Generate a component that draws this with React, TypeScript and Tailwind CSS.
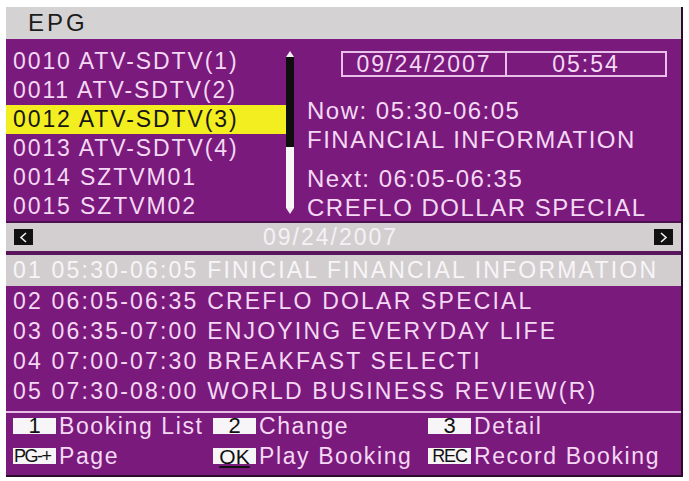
const CHANNELS = [
  "0010 ATV-SDTV(1)",
  "0011 ATV-SDTV(2)",
  "0012 ATV-SDTV(3)",
  "0013 ATV-SDTV(4)",
  "0014 SZTVM01",
  "0015 SZTVM02",
];

const EVENTS = [
  "02 06:05-06:35 CREFLO DOLAR SPECIAL",
  "03 06:35-07:00 ENJOYING EVERYDAY LIFE",
  "04 07:00-07:30 BREAKFAST SELECTI",
  "05 07:30-08:00 WORLD BUSINESS REVIEW(R)",
];

function ArrowKey({ dir }: { dir: "left" | "right" }) {
  return (
    <div className="w-[19px] h-[16px] bg-[#111] flex items-center justify-center shrink-0">
      <svg width="9" height="11" viewBox="0 0 9 11">
        <path
          d={dir === "left" ? "M7 1 L2 5.5 L7 10" : "M2 1 L7 5.5 L2 10"}
          stroke="#f2f2f2"
          strokeWidth="1.6"
          fill="none"
        />
      </svg>
    </div>
  );
}

function Key({ children, className = "" }: { children: React.ReactNode; className?: string }) {
  return (
    <div
      className={`w-[43px] h-[16px] bg-[#f7f5f7] text-[#111] flex items-center justify-center shrink-0 leading-none ${className}`}
    >
      {children}
    </div>
  );
}

function Legend({ keyEl, label }: { keyEl: React.ReactNode; label: string }) {
  return (
    <div className="flex items-center gap-[3px] h-[16px]">
      {keyEl}
      <span className="text-[23px] leading-none tracking-[1.6px] text-[#f4d8f4] whitespace-nowrap">{label}</span>
    </div>
  );
}

export default function App() {
  return (
    <div className="w-[689px] h-[481px] bg-white pl-[6px] pt-[7px] font-['Liberation_Sans',Arial,sans-serif]">
      <div className="w-[677px] h-[470px] flex flex-col border-r-2 border-b-2 border-[#2a0c2a] bg-[#7a1a7c] overflow-hidden">
        {/* title */}
        <div className="h-[32px] shrink-0 bg-[#d5d2d3] flex items-center pl-[22px]">
          <span className="text-[24px] leading-none tracking-[3px] text-[#1c1c1c]">EPG</span>
        </div>

        {/* channels + now/next */}
        <div className="h-[182px] shrink-0 flex overflow-hidden">
          <div className="w-[280px] pt-[8px]">
            {CHANNELS.map((c) => (
              <div
                key={c}
                className={`h-[29px] flex items-center pl-[7px] text-[23px] leading-none tracking-[1.9px] whitespace-nowrap ${
                  c.includes("(3)") ? "bg-[#f3ee1f] text-[#161616]" : "text-[#f4d8f4]"
                }`}
              >
                {c}
              </div>
            ))}
          </div>

          <div className="w-[8px] pt-[12px] flex flex-col items-center">
            <svg width="8" height="6" viewBox="0 0 8 6">
              <path d="M0 6 L4 0 L8 6 Z" fill="#f4eef4" />
            </svg>
            <div className="w-[8px] h-[90px] bg-[#0e0e0e]" />
            <div className="w-[8px] h-[61px] bg-[#f7f7f7]" />
            <svg width="8" height="6" viewBox="0 0 8 6">
              <path d="M0 0 L4 6 L8 0 Z" fill="#f4eef4" />
            </svg>
          </div>

          <div className="flex-1 pl-[13px] text-[#f4d8f4]">
            <div className="ml-[34px] mt-[12px] w-[326px] h-[26px] border-2 border-[#e8bfe8] flex text-[23px] leading-none tracking-[2px]">
              <div className="w-[164px] border-r-2 border-[#e8bfe8] flex items-center justify-center">09/24/2007</div>
              <div className="flex-1 flex items-center justify-center">05:54</div>
            </div>
            <div className="mt-[19px] text-[24px] leading-none tracking-[1.5px] whitespace-nowrap">
              <div className="h-[29px] flex items-center">Now: 05:30-06:05</div>
              <div className="h-[29px] flex items-center">FINANCIAL INFORMATION</div>
              <div className="h-[29px] flex items-center mt-[10px]">Next: 06:05-06:35</div>
              <div className="h-[29px] flex items-center">CREFLO DOLLAR SPECIAL</div>
            </div>
          </div>
        </div>

        <div className="h-[2px] shrink-0 bg-[#4d104f]" />

        {/* date bar */}
        <div className="h-[28px] shrink-0 bg-[#d3cfd0] flex items-center px-[8px]">
          <ArrowKey dir="left" />
          <div className="flex-1 text-center pr-[26px] text-[23px] leading-none tracking-[2px] text-[#f6f1f6]">
            09/24/2007
          </div>
          <ArrowKey dir="right" />
        </div>

        <div className="h-[4px] shrink-0 bg-[#5a165c]" />

        {/* events */}
        <div className="h-[31px] shrink-0 bg-[#d2cecf] flex items-center pl-[7px] text-[23px] leading-none tracking-[2.2px] text-[#f8f5f8] whitespace-nowrap">
          01 05:30-06:05 FINICIAL FINANCIAL INFORMATION
        </div>
        <div className="shrink-0">
          {EVENTS.map((e) => (
            <div
              key={e}
              className="h-[30px] flex items-center pl-[7px] text-[23px] leading-none tracking-[2.2px] text-[#f4d8f4] whitespace-nowrap"
            >
              {e}
            </div>
          ))}
        </div>
        <div className="h-[5px] shrink-0" />
        <div className="h-[2px] shrink-0 bg-[#e7bde7]" />

        {/* legend */}
        <div className="flex-1 pt-[5px] pl-[7px] grid grid-cols-[200px_215px_1fr] grid-rows-[16px_16px] gap-y-[14px]">
          <Legend keyEl={<Key className="text-[22px]">1</Key>} label="Booking List" />
          <Legend keyEl={<Key className="text-[22px]">2</Key>} label="Change" />
          <Legend keyEl={<Key className="text-[22px]">3</Key>} label="Detail" />
          <Legend
            keyEl={<Key className="w-[36px] text-[18px] tracking-[-1.5px] justify-start pl-[1px]">PG-+</Key>}
            label="Page"
          />
          <Legend keyEl={<Key className="text-[21px] underline">OK</Key>} label="Play Booking" />
          <Legend keyEl={<Key className="text-[18px] tracking-[-1.2px]">REC</Key>} label="Record Booking" />
        </div>
      </div>
    </div>
  );
}
